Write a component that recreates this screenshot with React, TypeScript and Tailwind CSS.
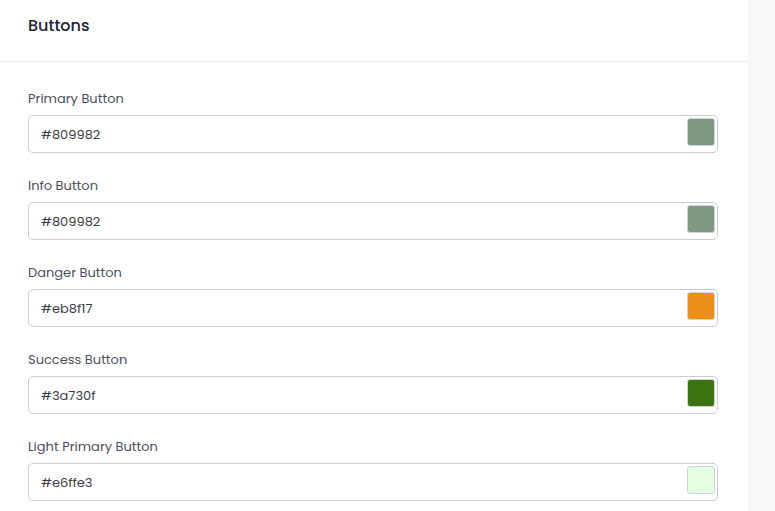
import React from 'react'

const fields = [
    { label: 'Primary Button', value: '#809982' },
    { label: 'Info Button', value: '#809982' },
    { label: 'Danger Button', value: '#eb8f17' },
    { label: 'Success Button', value: '#3a730f' },
    { label: 'Light Primary Button', value: '#e6ffe3' },
]

const App = () => {
    return (
        <div className="flex min-h-[511px] bg-[#f8f8fa] font-['Poppins','Noto_Sans',sans-serif]">
            <div className="w-[748px] bg-white">
                <div className="h-[62px] px-7 pt-[15px] border-b border-[#ebebf1]">
                    <h4 className="text-[16px] leading-[22px] font-medium text-[#1d2433]">Buttons</h4>
                </div>
                <div className="pl-7 pr-[30px] pt-[28px]">
                    {fields.map((f) => (
                        <div key={f.label} className="mb-[24px]">
                            <label className="block text-[13px] text-[#4b4f5c] leading-[18px] mb-[7px]">{f.label}</label>
                            <div className="flex items-start justify-between h-[38px] border border-[#c7ccd8] rounded-[5px] pl-3 pr-[2px] pt-[2px]">
                                <span className="text-[13px] leading-[34px] text-[#3a3d47]">{f.value}</span>
                                <span className="w-[28px] h-[28px] rounded-[3px] border border-[#cfd2d6]" style={{ backgroundColor: f.value }}></span>
                            </div>
                        </div>
                    ))}
                </div>
            </div>
        </div>
    )
}

export default App
